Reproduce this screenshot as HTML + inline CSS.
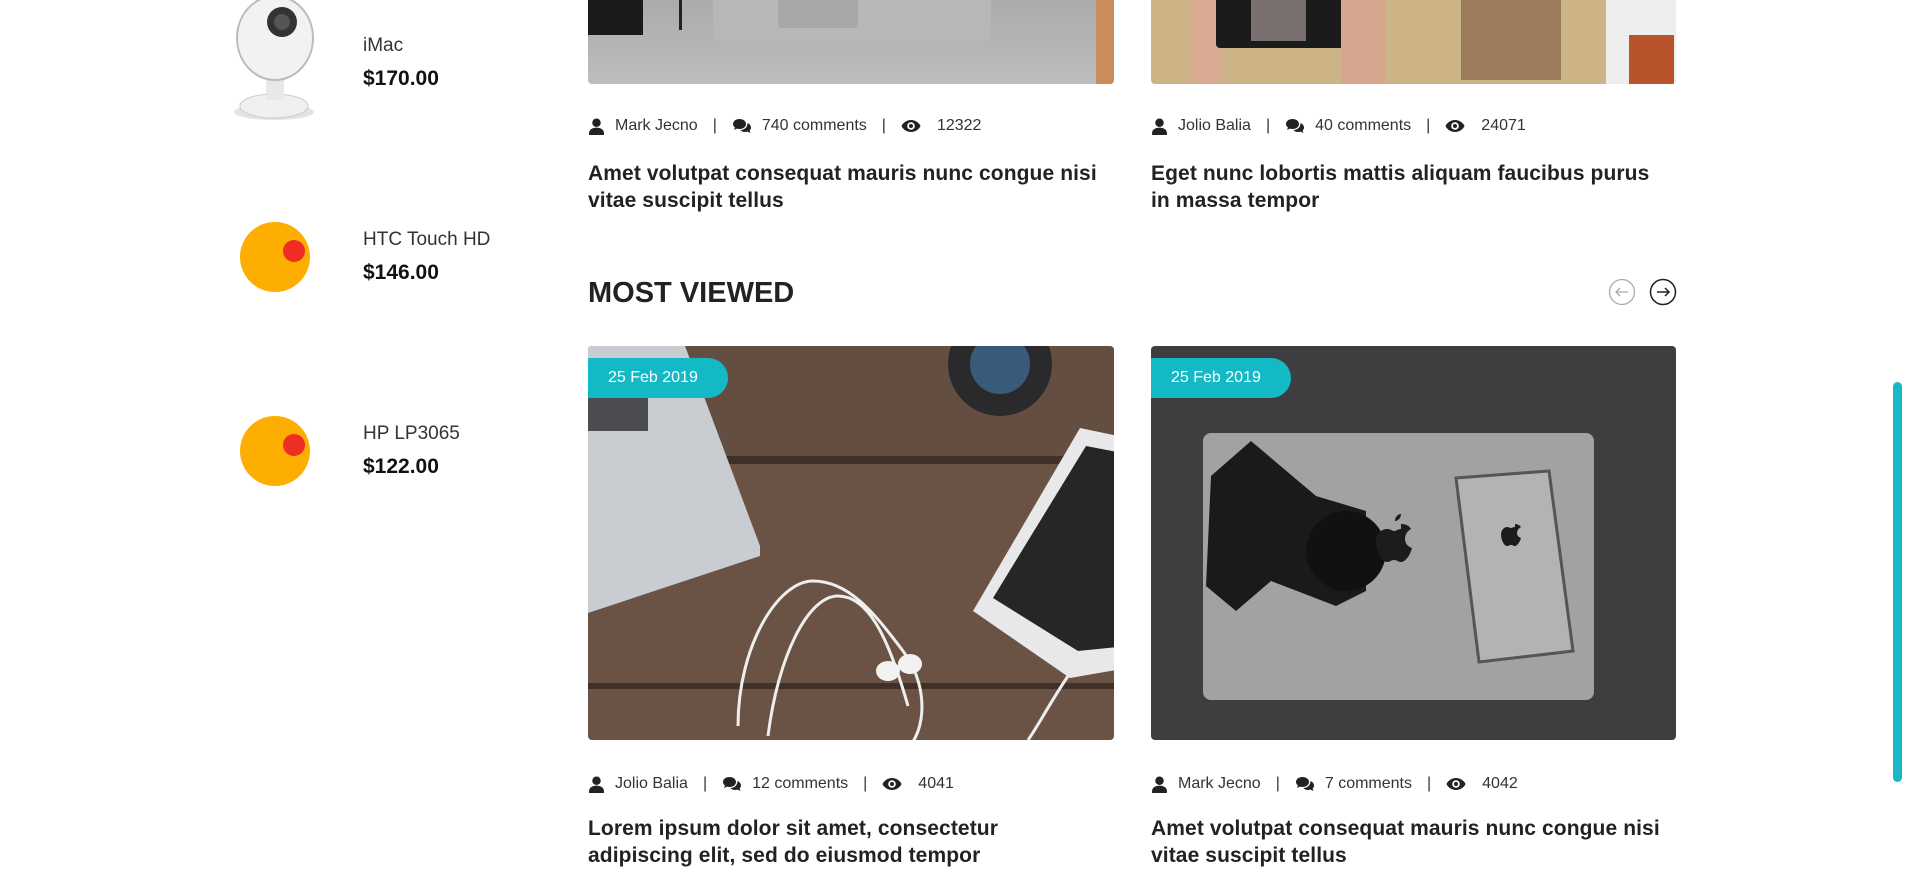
<!DOCTYPE html>
<html><head><meta charset="utf-8"><style>
*{margin:0;padding:0;box-sizing:border-box}
body{width:1910px;height:867px;background:#fff;position:relative;overflow:hidden;font-family:"Liberation Sans",sans-serif;color:#222}
.a{position:absolute}
.pn{font-size:19px;color:#333}
.pp{font-size:21px;font-weight:bold;color:#111}
.meta{font-size:16px;color:#333;display:flex;align-items:center;white-space:nowrap}
.meta svg{margin-right:10px}
.meta .sep{margin:0 15px}
.ttl{font-size:21px;font-weight:bold;line-height:27px;color:#222;width:560px;white-space:nowrap;letter-spacing:.1px}
.badge{position:absolute;left:0;top:12px;height:40px;width:140px;background:#14b9c6;color:#fff;font-size:16px;line-height:40px;padding-left:20px;border-radius:0 20px 20px 0}
.img{position:absolute;border-radius:4px;overflow:hidden}
</style></head><body>
<svg class="a" style="left:222px;top:0" width="106" height="124" viewBox="0 0 106 124">
<ellipse cx="52" cy="112" rx="40" ry="8" fill="#e3e3e3"/>
<ellipse cx="52" cy="106" rx="34" ry="12" fill="#f0f0f0" stroke="#ccc"/>
<rect x="44" y="70" width="18" height="30" fill="#e8e8e8"/>
<ellipse cx="53" cy="38" rx="38" ry="42" fill="#f2f2f2" stroke="#bbb" stroke-width="2"/>
<circle cx="60" cy="22" r="15" fill="#333"/><circle cx="60" cy="22" r="8" fill="#555"/>
</svg>
<div class="a pn" style="left:363px;top:35px">iMac</div>
<div class="a pp" style="left:363px;top:67px">$170.00</div>
<svg class="a" style="left:240px;top:222px" width="72" height="72"><circle cx="35" cy="35" r="35" fill="#fdae00"/><circle cx="54" cy="29" r="11" fill="#ee2d24"/></svg>
<div class="a pn" style="left:363px;top:229px">HTC Touch HD</div>
<div class="a pp" style="left:363px;top:261px">$146.00</div>
<svg class="a" style="left:240px;top:416px" width="72" height="72"><circle cx="35" cy="35" r="35" fill="#fdae00"/><circle cx="54" cy="29" r="11" fill="#ee2d24"/></svg>
<div class="a pn" style="left:363px;top:423px">HP LP3065</div>
<div class="a pp" style="left:363px;top:455px">$122.00</div>

<div class="img" style="left:588px;top:-10px;width:526px;height:94px;background:linear-gradient(#a9a9ab,#bdbdbf)">
<svg width="526" height="94"><rect x="0" y="0" width="55" height="45" fill="#1a1a1a"/><rect x="91" y="0" width="3" height="40" fill="#222"/><rect x="125" y="0" width="278" height="52" rx="8" fill="#b7b7b9"/><rect x="190" y="0" width="80" height="38" rx="4" fill="#a8a8aa"/><rect x="508" y="0" width="18" height="94" fill="#c98c5a"/></svg></div>
<div class="img" style="left:1151px;top:-10px;width:525px;height:94px;background:#cdb487">
<svg width="525" height="94"><rect x="40" y="0" width="30" height="94" fill="#d9ab92"/><rect x="65" y="0" width="145" height="58" rx="4" fill="#1b1b1b"/><rect x="100" y="6" width="55" height="45" fill="#7a7070"/><rect x="190" y="0" width="45" height="94" fill="#d6a68e"/><rect x="310" y="0" width="100" height="90" fill="#9d7c5c"/><rect x="455" y="10" width="70" height="84" fill="#eee"/><rect x="478" y="45" width="45" height="49" fill="#b8542a"/></svg></div>

<div class="a meta" style="left:588px;top:117px">
<svg width="17" height="17" viewBox="0 0 16 16"><circle cx="8" cy="4.5" r="4" fill="#222"/><path d="M1 16v-2c0-3 3-5 7-5s7 2 7 5v2z" fill="#222"/></svg>Mark Jecno<span class="sep">|</span>
<svg width="20" height="16" viewBox="0 0 20 16"><path d="M1 6c0-3 3-5 6.5-5S14 3 14 6s-3 5-6.5 5c-1 0-1.8-.1-2.6-.4L2 12l1-2.5C1.7 8.6 1 7.4 1 6z" fill="#222"/><path d="M15.5 5c2 .8 3.5 2.5 3.5 4.5 0 1.2-.5 2.2-1.4 3L18.5 15 15.5 13.6c-.8.3-1.6.4-2.5.4-2 0-3.6-.8-4.6-2 4 0 7.2-2.8 7.1-7z" fill="#222"/></svg>740 comments<span class="sep">|</span>
<svg width="20" height="14" viewBox="0 0 20 14"><path d="M10 1C5 1 1.5 4.5.5 7c1 2.5 4.5 6 9.5 6s8.5-3.5 9.5-6C18.5 4.5 15 1 10 1z" fill="#222"/><circle cx="10" cy="7" r="3.8" fill="#fff"/><circle cx="10" cy="7" r="2" fill="#222"/></svg><span style="margin-left:6px">12322</span></div>
<div class="a meta" style="left:1151px;top:117px">
<svg width="17" height="17" viewBox="0 0 16 16"><circle cx="8" cy="4.5" r="4" fill="#222"/><path d="M1 16v-2c0-3 3-5 7-5s7 2 7 5v2z" fill="#222"/></svg>Jolio Balia<span class="sep">|</span>
<svg width="20" height="16" viewBox="0 0 20 16"><path d="M1 6c0-3 3-5 6.5-5S14 3 14 6s-3 5-6.5 5c-1 0-1.8-.1-2.6-.4L2 12l1-2.5C1.7 8.6 1 7.4 1 6z" fill="#222"/><path d="M15.5 5c2 .8 3.5 2.5 3.5 4.5 0 1.2-.5 2.2-1.4 3L18.5 15 15.5 13.6c-.8.3-1.6.4-2.5.4-2 0-3.6-.8-4.6-2 4 0 7.2-2.8 7.1-7z" fill="#222"/></svg>40 comments<span class="sep">|</span>
<svg width="20" height="14" viewBox="0 0 20 14"><path d="M10 1C5 1 1.5 4.5.5 7c1 2.5 4.5 6 9.5 6s8.5-3.5 9.5-6C18.5 4.5 15 1 10 1z" fill="#222"/><circle cx="10" cy="7" r="3.8" fill="#fff"/><circle cx="10" cy="7" r="2" fill="#222"/></svg><span style="margin-left:6px">24071</span></div>
<div class="a ttl" style="left:588px;top:160px">Amet volutpat consequat mauris nunc congue nisi<br>vitae suscipit tellus</div>
<div class="a ttl" style="left:1151px;top:160px">Eget nunc lobortis mattis aliquam faucibus purus<br>in massa tempor</div>

<div class="a" style="left:588px;top:277px;font-size:29px;font-weight:bold;color:#222">MOST VIEWED</div>
<svg class="a" style="left:1608px;top:278px" width="70" height="30"><circle cx="14" cy="14" r="12.5" fill="none" stroke="#aaa" stroke-width="1.3"/><path d="M20 14H8M12 10l-4 4 4 4" fill="none" stroke="#aaa" stroke-width="1.3"/><circle cx="55" cy="14" r="12.5" fill="none" stroke="#222" stroke-width="1.5"/><path d="M49 14h12M57 10l4 4-4 4" fill="none" stroke="#222" stroke-width="1.5"/></svg>

<div class="img" style="left:588px;top:346px;width:526px;height:394px;background:#6a5344">
<svg width="526" height="394">
<rect x="0" y="110" width="526" height="8" fill="#3f3129"/><rect x="0" y="337" width="526" height="6" fill="#3f3129"/>
<rect x="0" y="0" width="526" height="110" fill="#5e4a3e" opacity=".5"/>
<polygon points="0,0 97,0 172,200 172,210 0,267" fill="#c9cdd2"/>
<rect x="0" y="25" width="60" height="60" fill="#2d2d30" opacity=".8"/>
<circle cx="412" cy="18" r="52" fill="#2a2a2c"/><circle cx="412" cy="18" r="30" fill="#3a5a7a"/>
<polygon points="492,82 540,92 540,322 482,332 385,265" fill="#e8e8ea"/>
<polygon points="498,100 540,108 540,300 490,305 405,252" fill="#262626"/>
<path d="M150 380c0-80 40-145 75-145s60 30 90 70 20 90 0 100M180 390c10-80 40-140 70-140s50 40 70 110M480 330c-20 30-30 50-40 64" fill="none" stroke="#eee" stroke-width="3"/>
<ellipse cx="300" cy="325" rx="12" ry="10" fill="#f2f2f2"/><ellipse cx="322" cy="318" rx="12" ry="10" fill="#f2f2f2"/>
</svg><div class="badge">25 Feb 2019</div></div>
<div class="img" style="left:1151px;top:346px;width:525px;height:394px;background:#3e3d40">
<svg width="525" height="394">
<rect x="52" y="87" width="391" height="267" rx="8" fill="#a2a2a5"/>
<polygon points="60,130 100,95 165,150 215,165 215,245 185,260 120,235 85,265 55,240" fill="#1a1a1a"/>
<circle cx="195" cy="205" r="40" fill="#111"/>
<path d="M250 178c8 0 10 5 10 5s-6 3-6 10 7 9 7 9c-2 8-7 14-11 14-3 0-4-2-7-2s-4 2-7 2c-5 0-11-12-11-20 0-10 7-13 11-13s5 2 7 2 4-2 7-2zM250 168c0 4-3 7-6 7 0-4 3-7 6-7z" fill="#1c1c1c"/>
<polygon points="305,132 398,125 422,305 328,316" fill="#b3b3b6" stroke="#555" stroke-width="3"/>
<path d="M364 178c4 0 6 3 6 3s-4 2-4 6 4 5 4 5c-1 4-4 8-6 8s-2-1-4-1-2 1-4 1c-3 0-6-7-6-11 0-6 4-8 6-8s3 1 4 1 2-1 4-1z" fill="#1c1c1c"/>
</svg><div class="badge">25 Feb 2019</div></div>

<div class="a meta" style="left:588px;top:775px">
<svg width="17" height="17" viewBox="0 0 16 16"><circle cx="8" cy="4.5" r="4" fill="#222"/><path d="M1 16v-2c0-3 3-5 7-5s7 2 7 5v2z" fill="#222"/></svg>Jolio Balia<span class="sep">|</span>
<svg width="20" height="16" viewBox="0 0 20 16"><path d="M1 6c0-3 3-5 6.5-5S14 3 14 6s-3 5-6.5 5c-1 0-1.8-.1-2.6-.4L2 12l1-2.5C1.7 8.6 1 7.4 1 6z" fill="#222"/><path d="M15.5 5c2 .8 3.5 2.5 3.5 4.5 0 1.2-.5 2.2-1.4 3L18.5 15 15.5 13.6c-.8.3-1.6.4-2.5.4-2 0-3.6-.8-4.6-2 4 0 7.2-2.8 7.1-7z" fill="#222"/></svg>12 comments<span class="sep">|</span>
<svg width="20" height="14" viewBox="0 0 20 14"><path d="M10 1C5 1 1.5 4.5.5 7c1 2.5 4.5 6 9.5 6s8.5-3.5 9.5-6C18.5 4.5 15 1 10 1z" fill="#222"/><circle cx="10" cy="7" r="3.8" fill="#fff"/><circle cx="10" cy="7" r="2" fill="#222"/></svg><span style="margin-left:6px">4041</span></div>
<div class="a meta" style="left:1151px;top:775px">
<svg width="17" height="17" viewBox="0 0 16 16"><circle cx="8" cy="4.5" r="4" fill="#222"/><path d="M1 16v-2c0-3 3-5 7-5s7 2 7 5v2z" fill="#222"/></svg>Mark Jecno<span class="sep">|</span>
<svg width="20" height="16" viewBox="0 0 20 16"><path d="M1 6c0-3 3-5 6.5-5S14 3 14 6s-3 5-6.5 5c-1 0-1.8-.1-2.6-.4L2 12l1-2.5C1.7 8.6 1 7.4 1 6z" fill="#222"/><path d="M15.5 5c2 .8 3.5 2.5 3.5 4.5 0 1.2-.5 2.2-1.4 3L18.5 15 15.5 13.6c-.8.3-1.6.4-2.5.4-2 0-3.6-.8-4.6-2 4 0 7.2-2.8 7.1-7z" fill="#222"/></svg>7 comments<span class="sep">|</span>
<svg width="20" height="14" viewBox="0 0 20 14"><path d="M10 1C5 1 1.5 4.5.5 7c1 2.5 4.5 6 9.5 6s8.5-3.5 9.5-6C18.5 4.5 15 1 10 1z" fill="#222"/><circle cx="10" cy="7" r="3.8" fill="#fff"/><circle cx="10" cy="7" r="2" fill="#222"/></svg><span style="margin-left:6px">4042</span></div>
<div class="a ttl" style="left:588px;top:815px">Lorem ipsum dolor sit amet, consectetur<br>adipiscing elit, sed do eiusmod tempor</div>
<div class="a ttl" style="left:1151px;top:815px">Amet volutpat consequat mauris nunc congue nisi<br>vitae suscipit tellus</div>

<div class="a" style="left:1893px;top:382px;width:9px;height:400px;border-radius:5px;background:#18b8c8"></div>
</body></html>
